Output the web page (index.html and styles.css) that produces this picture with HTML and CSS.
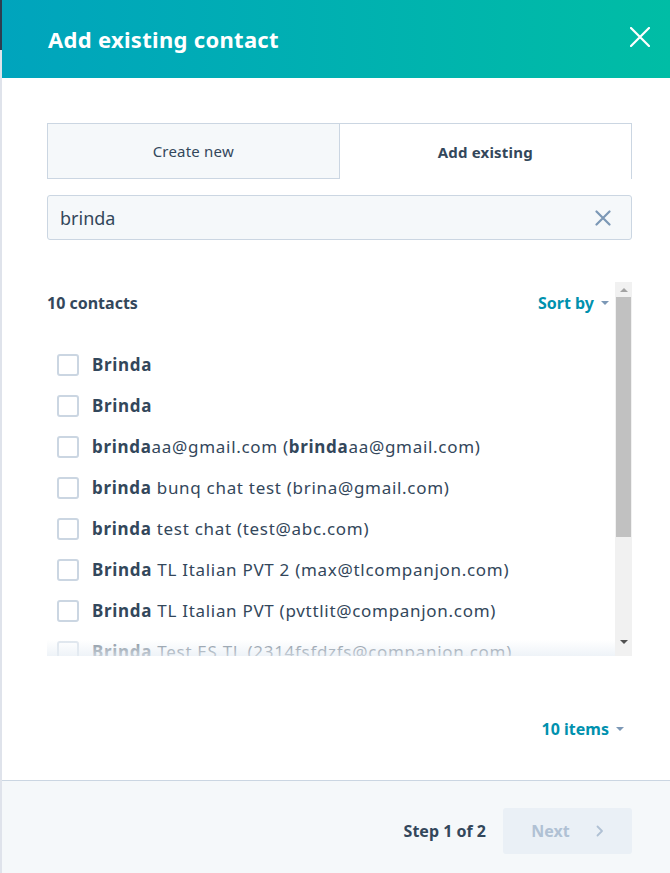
FILE: index.html
```html
<!DOCTYPE html>
<html lang="en">

<head>
    <meta charset="UTF-8">
    <meta name="viewport" content="width=device-width, initial-scale=1.0">
    <title>Add existing contact</title>
    <link rel="stylesheet" href="styles.css">
</head>

<body>
    <div class="page">
        <div class="page-edge"></div>
        <div class="panel">
            <div class="panel-header">
                <h1>Add existing contact</h1>
                <button class="close-btn" aria-label="Close">
                    <svg width="20" height="20" viewBox="0 0 20 20">
                        <path d="M1 1L19 19M19 1L1 19" stroke="#fff" stroke-width="2.2" stroke-linecap="round" />
                    </svg>
                </button>
            </div>

            <div class="panel-body">
                <div class="tabs">
                    <div class="tab">Create new</div>
                    <div class="tab active">Add existing</div>
                </div>

                <div class="search">
                    <span class="search-text">brinda</span>
                    <svg class="search-clear" width="16" height="16" viewBox="0 0 16 16">
                        <path d="M1.5 1.5L14.5 14.5M14.5 1.5L1.5 14.5" stroke="#7c98b6" stroke-width="2.2" stroke-linecap="round" />
                    </svg>
                </div>

                <div class="results">
                    <div class="results-scroll">
                        <div class="results-head">
                            <b>10 contacts</b>
                            <span class="link">Sort by <i class="caret"></i></span>
                        </div>
                        <ul class="contact-list">
                            <li><span class="box"></span><span><b>Brinda</b></span></li>
                            <li><span class="box"></span><span><b>Brinda</b></span></li>
                            <li><span class="box"></span><span><b>brinda</b>aa@gmail.com (<b>brinda</b>aa@gmail.com)</span></li>
                            <li><span class="box"></span><span><b>brinda</b> bunq chat test (brina@gmail.com)</span></li>
                            <li><span class="box"></span><span><b>brinda</b> test chat (test@abc.com)</span></li>
                            <li><span class="box"></span><span><b>Brinda</b> TL Italian PVT 2 (max@tlcompanjon.com)</span></li>
                            <li><span class="box"></span><span><b>Brinda</b> TL Italian PVT (pvttlit@companjon.com)</span></li>
                            <li><span class="box"></span><span><b>Brinda</b> Test ES TL (2314fsfdzfs@companjon.com)</span></li>
                        </ul>
                    </div>
                    <div class="scrollbar">
                        <i class="arrow up"></i>
                        <div class="thumb"></div>
                        <i class="arrow down"></i>
                    </div>
                    <div class="fade"></div>
                </div>

                <div class="pager">
                    <span class="link">10 items <i class="caret"></i></span>
                </div>
            </div>

            <div class="panel-footer">
                <span class="step">Step 1 of 2</span>
                <button class="next-btn" disabled>Next
                    <svg width="8" height="12" viewBox="0 0 8 12">
                        <path d="M1.5 1.5L6 6L1.5 10.5" stroke="#b0c1d4" stroke-width="1.8" fill="none" stroke-linecap="round" stroke-linejoin="round" />
                    </svg>
                </button>
            </div>
        </div>
    </div>
</body>

</html>
```

FILE: styles.css
```css
* {
    box-sizing: border-box;
}

body {
    margin: 0;
    font-family: "Noto Sans", "Lato", sans-serif;
    color: #33475b;
}

.page {
    display: flex;
    height: 873px;
}

.page-edge {
    width: 2px;
    background: linear-gradient(#2d3e50 0 50px, #dfe3eb 50px);
}

.panel {
    flex: 1;
    display: flex;
    flex-direction: column;
    background: #fff;
}

.panel-header {
    height: 78px;
    display: flex;
    align-items: center;
    justify-content: space-between;
    padding: 0 20px 0 46px;
    background: linear-gradient(90deg, #00a4bd 0%, #00bda5 100%);
}

.panel-header h1 {
    margin: 0;
    color: #fff;
    font-size: 22px;
    font-weight: 700;
    letter-spacing: 0.3px;
}

.close-btn {
    background: none;
    border: none;
    padding: 0;
    display: flex;
    margin-top: -4px;
}

.panel-body {
    flex: 1;
    padding: 45px 38px 0 45px;
}

.tabs {
    display: grid;
    grid-template-columns: 1fr 1fr;
    height: 56px;
}

.tab {
    display: flex;
    align-items: center;
    justify-content: center;
    font-size: 15px;
    letter-spacing: 0.2px;
    background: #f5f8fa;
    border: 1px solid #cbd6e2;
}

.tab.active {
    background: #fff;
    border-left: none;
    border-bottom: none;
    font-weight: 700;
}

.search {
    margin-top: 16px;
    height: 45px;
    display: flex;
    align-items: center;
    justify-content: space-between;
    padding: 0 20px 0 12px;
    background: #f5f8fa;
    border: 1px solid #cbd6e2;
    border-radius: 3px;
    font-size: 18px;
}

.results {
    position: relative;
    margin-top: 42px;
    height: 374px;
    display: flex;
    overflow: hidden;
}

.results-scroll {
    flex: 1;
}

.results-head {
    display: flex;
    justify-content: space-between;
    align-items: center;
    height: 42px;
    padding-right: 6px;
    font-size: 16px;
}

.link {
    color: #0091ae;
    font-weight: 700;
    font-size: 16px;
    display: flex;
    align-items: center;
    gap: 7px;
}

.caret {
    width: 0;
    height: 0;
    border-left: 4px solid transparent;
    border-right: 4px solid transparent;
    border-top: 4px solid #7c98b6;
}

.contact-list {
    list-style: none;
    margin: 20px 0 0;
    padding: 0 0 0 10px;
}

.contact-list li {
    display: flex;
    align-items: center;
    gap: 13px;
    height: 41px;
    font-size: 17px;
    letter-spacing: 0.7px;
    white-space: nowrap;
}

.box {
    width: 22px;
    height: 22px;
    border: 2px solid #cbd6e2;
    border-radius: 3px;
    flex-shrink: 0;
}

.scrollbar {
    width: 17px;
    background: #f1f1f1;
    display: flex;
    flex-direction: column;
    align-items: center;
}

.arrow {
    width: 0;
    height: 0;
    border-left: 4px solid transparent;
    border-right: 4px solid transparent;
    margin: 6px 0 5px;
}

.arrow.up {
    border-bottom: 4px solid #a3a3a3;
}

.arrow.down {
    border-top: 4px solid #505050;
    margin-top: auto;
    margin-bottom: 12px;
}

.thumb {
    width: 15px;
    height: 240px;
    background: #c1c1c1;
}

.fade {
    position: absolute;
    left: 0;
    right: 17px;
    bottom: 0;
    height: 16px;
    background: linear-gradient(rgba(255, 255, 255, 0.4), rgba(234, 240, 246, 0.8));
}

.pager {
    display: flex;
    justify-content: flex-end;
    padding: 62px 8px 0 0;
}

.panel-footer {
    height: 93px;
    display: flex;
    align-items: center;
    justify-content: flex-end;
    gap: 17px;
    padding: 8px 38px 0 0;
    background: #f5f8fa;
    border-top: 1px solid #cbd6e2;
}

.step {
    font-size: 16px;
    font-weight: 700;
}

.next-btn {
    width: 129px;
    height: 46px;
    display: flex;
    align-items: center;
    justify-content: center;
    gap: 26px;
    font-family: inherit;
    font-size: 16px;
    font-weight: 700;
    color: #b0c1d4;
    background: #eaf0f6;
    border: none;
    border-radius: 3px;
}
```
